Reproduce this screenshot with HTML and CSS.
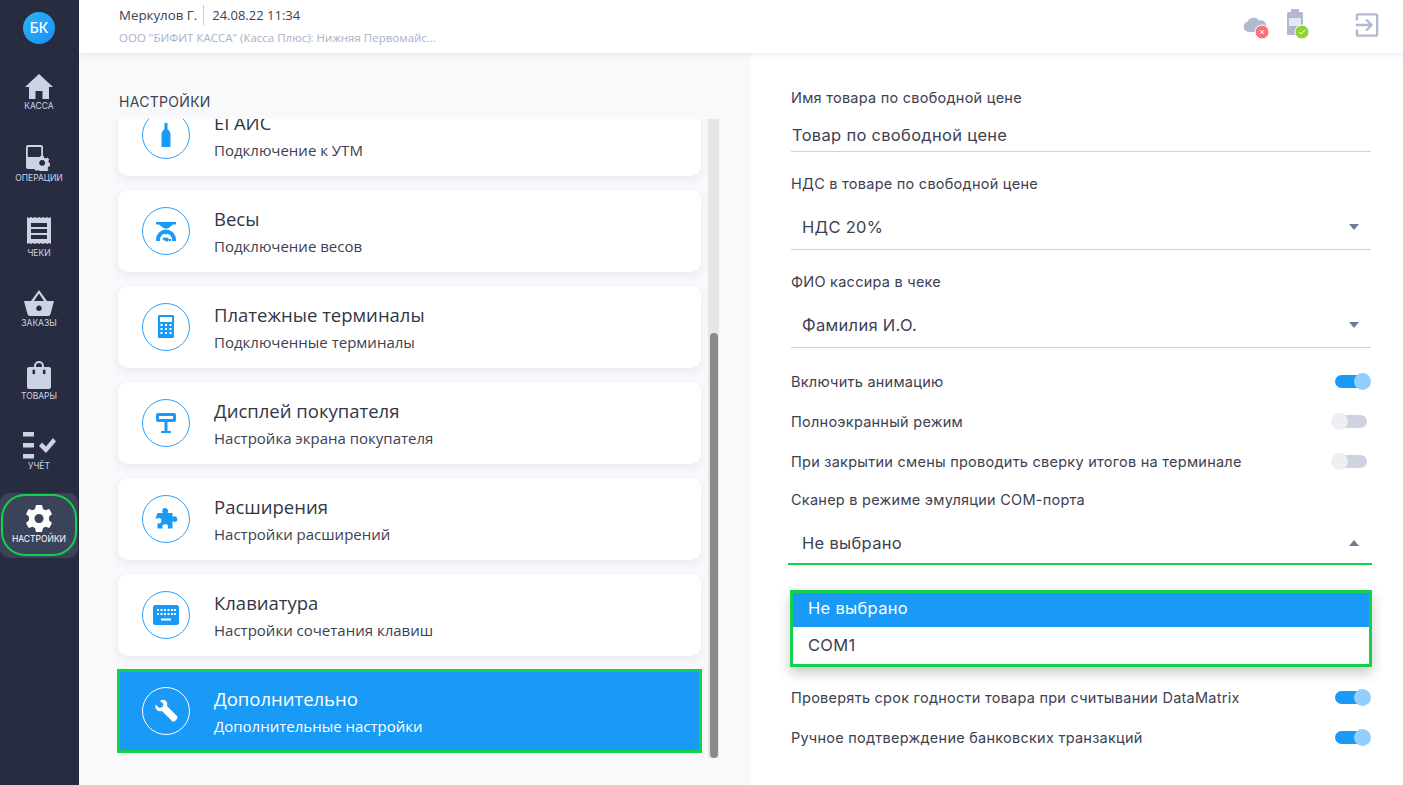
FILE: index.html
```html
<!DOCTYPE html>
<html lang="ru">
<head>
<meta charset="utf-8">
<title>Настройки</title>
<link rel="stylesheet" href="styles.css">
</head>
<body>
<div class="app">
  <nav class="sidebar">
    <div class="avatar-cell"><div class="avatar">БК</div></div>
    <a class="nav-item">
      <svg class="nav-icon" width="28" height="25" viewBox="0 0 28 25"><path d="M14 0 L28 13 L24 13 L24 25 L17.500 25 L17.500 17 L10.500 17 L10.500 25 L4 25 L4 13 L0 13 Z"/></svg>
      <span>Касса</span>
    </a>
    <a class="nav-item">
      <svg class="nav-icon" width="26" height="26" viewBox="0 0 26 26"><path fill-rule="evenodd" d="M2 0 H15 Q17 0 17 2 V12.500 A8 8 0 0 0 10.500 24 H2 Q0 24 0 22 V2 Q0 0 2 0 Z M1.800 2 V12 H15.200 V2 Z"/><path fill-rule="evenodd" d="M16.500 12.500 h3 l.5 1.800 1.700 .7 1.600-1 2 2-1 1.600 .7 1.700 1 .5 v3 l-1.800 .5-.7 1.700 1 1.600-2 2-1.600-1-1.700 .7-.5 1 h-3 l-.5-1.800-1.700-.7-1.600 1-2-2 1-1.600-.7-1.700-1.800-.5 v-3 l1.800-.5 .7-1.700-1-1.600 2-2 1.600 1 1.700-.7 Z M18 16.500 a3 3 0 1 0 .01 0 Z" transform="translate(-1.500 -1.200) scale(.98)"/></svg>
      <span>Операции</span>
    </a>
    <a class="nav-item nav-item-gap">
      <svg class="nav-icon" width="24" height="27" viewBox="0 0 24 27"><path fill-rule="evenodd" d="M0 0 l2 1 2-1 2 1 2-1 2 1 2-1 2 1 2-1 2 1 2-1 2 1 2-1 V27 l-2-1-2 1-2-1-2 1-2-1-2 1-2-1-2 1-2-1-2 1-2-1-2 1 Z M4 6 V10 H20 V6 Z M4 12 V16 H20 V12 Z M4 18 V22 H20 V18 Z"/></svg>
      <span>Чеки</span>
    </a>
    <a class="nav-item">
      <svg class="nav-icon" width="30" height="26" viewBox="0 0 30 26"><path fill-rule="evenodd" d="M15 0 L23 11 H30 L26.500 24 Q26 26 24 26 H6 Q4 26 3.500 24 L0 11 H7 Z M15 3.500 L10 11 H20 Z M15 15.500 a2.800 2.800 0 1 0 .01 0 Z"/></svg>
      <span>Заказы</span>
    </a>
    <a class="nav-item">
      <svg class="nav-icon" width="24" height="28" viewBox="0 0 24 28"><path fill-rule="evenodd" d="M7 6 V5 A5 5 0 0 1 17 5 V6 H22 Q24 6 24 8 V26 Q24 28 22 28 H2 Q0 28 0 26 V8 Q0 6 2 6 Z M9 6 H15 V5 A3 3 0 0 0 9 5 Z M6.800 8.500 a1.300 1.300 0 0 0 -1.300 1.300 V12 a1.300 1.300 0 0 0 2.600 0 V9.800 a1.300 1.300 0 0 0 -1.300-1.300 Z M17.200 8.500 a1.300 1.300 0 0 0 -1.300 1.300 V12 a1.300 1.300 0 0 0 2.600 0 V9.800 a1.300 1.300 0 0 0 -1.300-1.300 Z"/></svg>
      <span>Товары</span>
    </a>
    <a class="nav-item">
      <svg class="nav-icon" width="33" height="27" viewBox="0 0 33 27"><path d="M0 0 H11 V4.500 H0 Z M0 11 H11 V15.500 H0 Z M0 22 H11 V26.500 H0 Z"/><path d="M16 14 L19 10.500 L23 14.500 L30 6 L33 9.500 L23 21 Z"/></svg>
      <span>Учёт</span>
    </a>
    <a class="nav-item nav-item-active">
      <svg class="nav-icon" width="26" height="27" viewBox="0 0 26 27"><path fill-rule="evenodd" d="M10 0 H16 L17 4 L19.500 5.300 L23.300 4 L26 9 L23 11.800 V15.200 L26 18 L23.300 23 L19.500 21.700 L17 23 L16 27 H10 L9 23 L6.500 21.700 L2.700 23 L0 18 L3 15.200 V11.800 L0 9 L2.700 4 L6.500 5.300 L9 4 Z M13 9 a4.500 4.500 0 1 0 .01 0 Z"/></svg>
      <span>Настройки</span>
      <i class="nav-ring"></i>
    </a>
  </nav>

  <div class="main">
    <header class="topbar">
      <div class="who">
        <div class="who-line">
          <span class="who-name">Меркулов Г.</span>
          <span class="who-date">24.08.22 11:34</span>
        </div>
        <div class="who-org">ООО "БИФИТ КАССА" (Касса Плюс): Нижняя Первомайс...</div>
      </div>
      <div class="status">
        <span class="status-cloud">
          <svg width="26" height="22" viewBox="0 0 26 22"><path class="ic-grey" d="M5.500 15 A5.200 5.200 0 0 1 4.500 4.800 A6.500 6.500 0 0 1 16 3.500 A5.500 5.500 0 0 1 19 15 Z"/><circle class="ic-red" cx="19" cy="15" r="7"/><path class="ic-mark" d="M17 13 L21 17 M21 13 L17 17"/></svg>
        </span>
        <span class="status-kkt">
          <svg width="24" height="30" viewBox="0 0 24 30"><path class="ic-grey" d="M4 0 H12 V3 H14.500 Q16 3 16 4.500 V26 H0 V4.500 Q0 3 1.500 3 H4 Z"/><path class="ic-pale" d="M2 9 H14 V17 H2 Z"/><circle class="ic-green" cx="15" cy="23" r="7"/><path class="ic-mark" d="M12 23 L14.200 25 L18 21"/></svg>
        </span>
        <span class="status-exit">
          <svg width="24" height="24" viewBox="0 0 26 26"><path class="ic-line" d="M2 8 V3 Q2 1.500 3.500 1.500 H22.500 Q24 1.500 24 3 V23 Q24 24.500 22.500 24.500 H3.500 Q2 24.500 2 23 V18 M1 13 H17 M12 7 L18 13 L12 19"/></svg>
        </span>
      </div>
    </header>

    <div class="content">
      <section class="left">
        <h1 class="left-title">Настройки</h1>
        <div class="list-wrap">
          <div class="list">
            <div class="list-inner">
              <div class="card">
                <span class="card-ico"><svg width="24" height="28" viewBox="0 0 24 28"><path d="M10.500 2 H13.500 V8 Q16.500 10 16.500 13 V26 H7.500 V13 Q7.500 10 10.500 8 Z"/></svg></span>
                <div class="card-text"><div class="card-title">ЕГАИС</div><div class="card-sub">Подключение к УТМ</div></div>
              </div>
              <div class="card">
                <span class="card-ico"><svg width="24" height="24" viewBox="0 0 24 24"><path d="M2 3 H22 V5.500 H19 L14 9.500 H10 L5 5.500 H2 Z"/><path fill-rule="evenodd" d="M12 10.500 A10 10 0 0 1 22 20.500 V22 H18 V20.500 A6 6 0 0 0 6 20.500 V22 H2 V20.500 A10 10 0 0 1 12 10.500 Z"/><path d="M8 20 L11 18 L11.500 19 A2 2 0 1 1 11.500 22 Z"/><path d="M15 20 h2 v2 h-2 Z M11.200 13.500 h1.600 v2 h-1.600 Z"/></svg></span>
                <div class="card-text"><div class="card-title">Весы</div><div class="card-sub">Подключение весов</div></div>
              </div>
              <div class="card">
                <span class="card-ico"><svg width="24" height="24" viewBox="0 0 24 24"><path fill-rule="evenodd" d="M5 0 H19 Q20 0 20 1 V22 Q20 23 19 23 H5 Q4 23 4 22 V1 Q4 0 5 0 Z M6 2 V7 H18 V2 Z M6.500 9 v2 h2 v-2 Z M11 9 v2 h2 v-2 Z M15.500 9 v2 h2 v-2 Z M6.500 13 v2 h2 v-2 Z M11 13 v2 h2 v-2 Z M15.500 13 v2 h2 v-2 Z M6.500 17 v2 h2 v-2 Z M11 17 v2 h2 v-2 Z M15.500 17 v2 h2 v-2 Z"/></svg></span>
                <div class="card-text"><div class="card-title">Платежные терминалы</div><div class="card-sub">Подключенные терминалы</div></div>
              </div>
              <div class="card">
                <span class="card-ico"><svg width="24" height="24" viewBox="0 0 24 24"><path fill-rule="evenodd" d="M4 2 H20 Q22 2 22 4 V9 Q22 11 20 11 H13.500 V20 H17 V22 H7 V20 H10.500 V11 H4 Q2 11 2 9 V4 Q2 2 4 2 Z M5 5 V8 H19 V5 Z"/></svg></span>
                <div class="card-text"><div class="card-title">Дисплей покупателя</div><div class="card-sub">Настройка экрана покупателя</div></div>
              </div>
              <div class="card">
                <span class="card-ico"><svg width="24" height="24" viewBox="0 0 24 24"><path d="M9 1.500 Q12.500 0 14 3 Q14.500 5 13.500 6 L18.500 6 L18.500 10 Q21 8.500 22.500 10 Q24 12.500 22.500 14.500 Q20.500 15.500 18.500 14 L18.500 21.500 L13.500 21.500 Q15 19 13 17.500 Q10 16.500 8.500 18.500 Q8 20 9 21.500 L3.500 21.500 L3.500 16 Q5.500 17 7 15.500 Q8 13 6.500 11.500 Q5 10.500 3.500 11.500 L1.500 11.500 L3.500 6 L9 6 Q7.500 3.500 9 1.500 Z"/></svg></span>
                <div class="card-text"><div class="card-title">Расширения</div><div class="card-sub">Настройки расширений</div></div>
              </div>
              <div class="card">
                <span class="card-ico"><svg width="26" height="24" viewBox="0 0 26 24"><path fill-rule="evenodd" d="M2.500 2 H23.500 Q26 2 26 4.500 V19.500 Q26 22 23.500 22 H2.500 Q0 22 0 19.500 V4.500 Q0 2 2.500 2 Z M4 6 v2 h2 v-2 Z M7.500 6 v2 h2 v-2 Z M11 6 v2 h2 v-2 Z M14.500 6 v2 h2 v-2 Z M18 6 v2 h2 v-2 Z M21 6 v2 h2 v-2 Z M4 10 v2 h2 v-2 Z M7.500 10 v2 h2 v-2 Z M11 10 v2 h2 v-2 Z M14.500 10 v2 h2 v-2 Z M18 10 v2 h2 v-2 Z M21 10 v2 h2 v-2 Z M8 15.500 v2 h10 v-2 Z"/></svg></span>
                <div class="card-text"><div class="card-title">Клавиатура</div><div class="card-sub">Настройки сочетания клавиш</div></div>
              </div>
              <div class="card card-active">
                <span class="card-ico"><svg width="24" height="24" viewBox="0 0 24 24"><path d="M7.500 1 Q11 0 12.800 3 Q13.800 5.200 13 7 L23 17 Q24 18.500 23 20 L21 22 Q19.500 23 18 22 L8 12 Q5 13 3 11.300 Q1 9 1.300 5.500 L5.500 9 L8.500 8 L9.500 5 L6 2 Z"/></svg></span>
                <div class="card-text"><div class="card-title">Дополнительно</div><div class="card-sub">Дополнительные настройки</div></div>
              </div>
            </div>
          </div>
          <div class="scroll"><div class="scroll-thumb"></div></div>
        </div>
      </section>

      <section class="right">
        <div class="field">
          <div class="label">Имя товара по свободной цене</div>
          <div class="input">Товар по свободной цене</div>
        </div>
        <div class="field">
          <div class="label">НДС в товаре по свободной цене</div>
          <div class="select"><span>НДС 20%</span><i class="caret"></i></div>
        </div>
        <div class="field">
          <div class="label">ФИО кассира в чеке</div>
          <div class="select"><span>Фамилия И.О.</span><i class="caret"></i></div>
        </div>
        <div class="toggles">
          <div class="toggle-row"><span class="label">Включить анимацию</span><i class="switch switch-on"><b></b></i></div>
          <div class="toggle-row"><span class="label">Полноэкранный режим</span><i class="switch"><b></b></i></div>
          <div class="toggle-row"><span class="label">При закрытии смены проводить сверку итогов на терминале</span><i class="switch"><b></b></i></div>
        </div>
        <div class="field field-open">
          <div class="label">Сканер в режиме эмуляции COM-порта</div>
          <div class="select select-open">
            <span>Не выбрано</span><i class="caret caret-up"></i>
            <u class="focus-line"></u>
            <div class="menu">
              <div class="opt opt-sel">Не выбрано</div>
              <div class="opt">COM1</div>
            </div>
          </div>
        </div>
        <div class="toggles toggles-end">
          <div class="toggle-row"><span class="label">Проверять срок годности товара при считывании DataMatrix</span><i class="switch switch-on"><b></b></i></div>
          <div class="toggle-row"><span class="label">Ручное подтверждение банковских транзакций</span><i class="switch switch-on"><b></b></i></div>
        </div>
      </section>
    </div>
  </div>
</div>
</body>
</html>
```

FILE: styles.css
```css
* { box-sizing: border-box; }
html, body { margin: 0; height: 100%; }
body {
  overflow: hidden;
  background: #fff;
  color: #3d4152;
  font-family: "Open Sans", "Noto Sans", sans-serif;
}
.app { display: flex; width: 1403px; height: 785px; overflow: hidden; }

/* sidebar */
.sidebar {
  flex: 0 0 79px;
  background: #272c40;
  display: grid;
  grid-template-rows: 56px 55px 72px 75px 70px 73px 70px 87px;
  grid-template-columns: 78px;
  align-content: start;
}
.avatar-cell { display: flex; justify-content: center; padding-top: 12px; }
.avatar {
  width: 32px; height: 32px; border-radius: 50%;
  background: linear-gradient(135deg, #2ab5f5, #1a8ff7);
  color: #fff;
  font: 500 14px/32px "Inter", sans-serif;
  text-align: center;
}
.nav-item {
  display: flex; flex-direction: column; align-items: center; justify-content: flex-end;
  gap: 2px;
  color: #cdd3e2;
  font: 400 8.500px/10px "Inter", sans-serif;
  text-transform: uppercase;
}
.nav-item-gap { gap: 4px; }
.nav-icon { display: block; fill: #cdd3e2; }
.nav-item-active {
  position: relative;
  margin: 22px 0 0;
  padding-bottom: 14px;
  height: 65px;
  border-radius: 9px;
  background: #3a4359;
  color: #fff;
}
.nav-item-active .nav-icon { fill: #fff; }
.nav-ring {
  position: absolute;
  left: 1px; right: 1px; top: 1px; bottom: 2px;
  border: 2px solid #12d14b;
  border-radius: 24px;
}

/* main */
.main { flex: 1; display: flex; flex-direction: column; min-width: 0; }
.topbar {
  position: relative;
  z-index: 2;
  flex: 0 0 53px;
  background: #fff;
  box-shadow: 0 1px 6px rgba(60, 70, 100, .12);
  display: flex;
  justify-content: space-between;
  padding: 5px 24px 0 40px;
}
.who-line { display: flex; align-items: center; height: 20px; font-size: 13px; color: #3d4152; }
.who-name { padding-right: 6px; border-right: 1px solid #c9ccd3; line-height: 20px; font-size: 13.300px; }
.who-date { padding-left: 8px; font-size: 13px; }
.who-org { margin-top: 4px; font-size: 11.500px; line-height: 18px; color: #a9b2c9; }
.status { display: flex; align-items: flex-start; }
.status-cloud { margin: 12px 0 0 0; }
.status-kkt { margin: 4px 0 0 18px; }
.status-exit { margin: 8px 0 0 44px; }
.status svg { display: block; }
.ic-grey { fill: #b0b9cf; }
.ic-pale { fill: #e4e8f0; }
.ic-red { fill: #f9747a; stroke: #fff; stroke-width: 1; }
.ic-green { fill: #8fd42f; stroke: #fff; stroke-width: 1; }
.ic-mark { fill: none; stroke: #fff; stroke-width: 1; }
.ic-line { fill: none; stroke: #b0b9cf; stroke-width: 2.500; }

.content { flex: 1; display: flex; min-height: 0; }

/* left */
.left { flex: 0 0 672px; background: #f8f9fb; padding: 0 0 0 30px; display: flex; flex-direction: column; }
.left-title {
  margin: 39px 0 7px 10px;
  font: 400 14px/20px "Inter", sans-serif;
  letter-spacing: .3px;
  color: #3d4152;
  text-transform: uppercase;
}
.list-wrap { flex: 0 0 639px; display: flex; }
.list { flex: 0 0 599px; overflow: hidden; padding: 0 7px 0 9px; }
.list-inner { display: flex; flex-direction: column; gap: 14px; margin-top: -25px; }
.card {
  flex: 0 0 82px;
  height: 82px;
  background: #fff;
  border-radius: 10px;
  box-shadow: 0 3px 10px rgba(70, 80, 120, .09);
  display: flex;
  align-items: center;
  padding-left: 24px;
  gap: 24px;
}
.card-ico {
  flex: 0 0 48px; height: 48px;
  border: 1px solid #2b9ff5;
  border-radius: 50%;
  display: flex; align-items: center; justify-content: center;
}
.card-ico svg { fill: #1a9af7; display: block; }
.card-title { font-size: 18.500px; line-height: 24px; color: #323648; }
.card-sub { margin-top: 5px; font-size: 15px; line-height: 20px; color: #3d4152; }
.card-active {
  background: #1a9af7;
  border-radius: 0;
  outline: 3px solid #12d14b;
  outline-offset: -2px;
  box-shadow: none;
}
.card-active .card-ico { border-color: #fff; }
.card-active .card-ico svg { fill: #fff; }
.card-active .card-title, .card-active .card-sub { color: #fff; }
.scroll { flex: 0 0 11px; height: 639px; padding: 214px 1px 0 2px; background: #e6e6e6; }
.scroll-thumb { height: 425px; background: #8a8a8a; border-radius: 4px; }

/* right */
.right { flex: 1; padding: 34px 32px 0 40px; background: #fff; }
.field { margin-bottom: 21px; }
.label { display: block; font: 400 14.500px/22px "Inter", sans-serif; height: 20px; letter-spacing: .25px; color: #3d4152; }
.input {
  height: 45px;
  border-bottom: 1px solid #cfd2d8;
  padding: 16px 0 0 1px;
  font: 400 16.500px/24px "Inter", sans-serif;
  letter-spacing: .3px;
}
.select {
  position: relative;
  height: 57px;
  border-bottom: 1px solid #cfd2d8;
  padding: 22px 12px 0 11px;
  display: flex;
  justify-content: space-between;
  font: 400 16.500px/24px "Inter", sans-serif;
  letter-spacing: .3px;
}
.caret {
  width: 0; height: 0;
  margin-top: 9px;
  border: 5.500px solid transparent;
  border-top: 6px solid #6b7a9b;
  border-bottom: 0;
}
.caret-up { border-top: 0; border-bottom: 6px solid #6b7a9b; }
.toggles { margin: -8px 0 8px; }
.toggle-row { height: 40px; display: flex; align-items: center; justify-content: space-between; }
.switch { flex: 0 0 40px; height: 17px; padding: 2px 4px; display: block; }
.switch b {
  position: relative;
  display: block; height: 13px; border-radius: 7px;
  background: #cdd3e0;
}
.switch b::after {
  content: "";
  position: absolute;
  left: -4px; top: -2px;
  width: 17px; height: 17px; border-radius: 50%;
  background: #eeeff3;
}
.switch-on b { background: #1a9af7; }
.switch-on b::after { left: auto; right: -4px; background: #93cefc; }

.field-open { margin-bottom: 112px; }
.select-open { height: 56px; border-bottom: 0; }
.focus-line {
  position: absolute;
  left: -3px; right: -1px; bottom: 0;
  height: 2px;
  background: #12d14b;
}
.menu {
  position: absolute;
  z-index: 3;
  left: -1px; right: -1px; top: 81px;
  height: 77px;
  border: 3px solid #12d14b;
  background: #fff;
  box-shadow: 0 6px 12px rgba(0, 0, 0, .22);
}
.opt { height: 37px; padding: 6px 15px; line-height: 24px; color: #3d4152; }
.opt-sel { height: 34px; padding-top: 3px; background: #1a9af7; color: #fff; }
.toggles-end { margin: 0; }
```
